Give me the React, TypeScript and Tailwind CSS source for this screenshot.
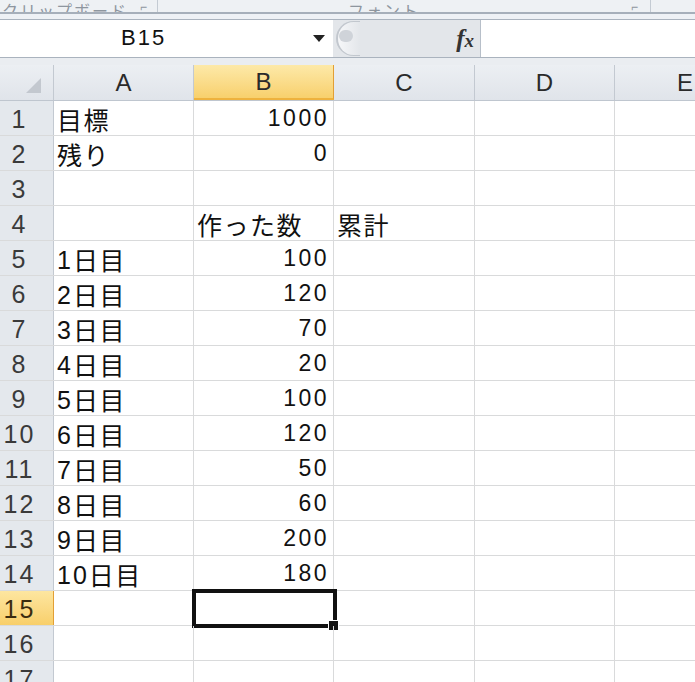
import React from "react";

const latin = { fontFamily: '"Liberation Sans", "Noto Sans CJK JP", sans-serif' };
const cjk = { fontFamily: '"Noto Sans CJK JP", sans-serif' };

type Row = { n: number; a?: string; b?: string; bLeft?: boolean; c?: string };

const rows: Row[] = [
  { n: 1, a: "目標", b: "1000" },
  { n: 2, a: "残り", b: "0" },
  { n: 3 },
  { n: 4, b: "作った数", bLeft: true, c: "累計" },
  { n: 5, a: "1日目", b: "100" },
  { n: 6, a: "2日目", b: "120" },
  { n: 7, a: "3日目", b: "70" },
  { n: 8, a: "4日目", b: "20" },
  { n: 9, a: "5日目", b: "100" },
  { n: 10, a: "6日目", b: "120" },
  { n: 11, a: "7日目", b: "50" },
  { n: 12, a: "8日目", b: "60" },
  { n: 13, a: "9日目", b: "200" },
  { n: 14, a: "10日目", b: "180" },
  { n: 15 },
  { n: 16 },
  { n: 17 },
];

function Txt({ s, wide }: { s: string; wide?: boolean }) {
  const parts = s.match(/[0-9A-Za-z]+|[^0-9A-Za-z]+/g) || [];
  return (
    <span className="whitespace-nowrap flex items-end">
      {parts.map((p, i) =>
        /^[0-9A-Za-z]/.test(p) ? (
          wide ? (
            <span key={i} className="text-[25px] leading-none tracking-[2px] pb-[2px] text-[#111]" style={latin}>
              {p}
            </span>
          ) : (
            <span key={i} className="text-[23px] leading-none tracking-[2.5px] pb-[5px] text-[#111]" style={latin}>
              {p}
            </span>
          )
        ) : (
          <span key={i} className="text-[25px] leading-none tracking-[1.5px] pb-[3px] text-[#111]" style={cjk}>
            {p}
          </span>
        )
      )}
    </span>
  );
}

function Cell({ w, s, right, sel, wide }: { w: string; s?: string; right?: boolean; sel?: boolean; wide?: boolean }) {
  return (
    <div
      className={`relative h-full shrink-0 border-r border-[#d9dadb] flex items-end ${w} ${right ? "justify-end pr-[4px]" : "justify-start pl-[3px]"}`}
    >
      {s && <Txt s={s} wide={wide} />}
      {sel && (
        <>
          <div className="absolute left-[-2px] top-[-2px] w-[145px] h-[39px] border-[4px] border-[#111]" />
          <div className="absolute left-[134px] top-[29px] w-[11px] h-[11px] bg-[#111] border-[1.5px] border-white" />
        </>
      )}
    </div>
  );
}

function HeadCell({ w, label, extra }: { w: string; label: string; extra?: string }) {
  return (
    <div
      className={`${w} shrink-0 h-full flex items-center justify-center leading-none text-[24px] text-[#2a2a2a] ${extra ?? "border-r border-[#c3c9d1]"}`}
      style={latin}
    >
      {label}
    </div>
  );
}

export default function App() {
  return (
    <div className="w-[695px] h-[682px] overflow-hidden bg-white flex flex-col" style={latin}>
      {/* ribbon group labels strip */}
      <div className="h-[12px] shrink-0 bg-[#eef1f4] relative flex items-end overflow-hidden text-[#8e969f]">
        <div className="w-[158px] h-full flex items-end justify-between pl-[2px] pr-[10px] border-r border-[#c4cbd3]">
          <span className="text-[16px] leading-none translate-y-[6px] tracking-[2px]" style={cjk}>クリップボード</span>
          <span className="text-[12px] leading-none translate-y-[1px]">⌐</span>
        </div>
        <div className="w-[493px] h-full flex items-end justify-between pl-[190px] pr-[12px] border-r border-[#c4cbd3]">
          <span className="text-[16px] leading-none translate-y-[6px] tracking-[2px]" style={cjk}>フォント</span>
          <span className="text-[12px] leading-none translate-y-[1px]">⌐</span>
        </div>
        <div className="flex-1" />
      </div>
      <div className="h-[2px] shrink-0 bg-[#a6afba]" />
      {/* formula bar */}
      <div className="h-[51px] shrink-0 bg-[#e6eaee] flex flex-col">
        <div className="h-[5px] bg-[#eef1f5]" />
        <div className="h-[39px] flex border-y border-[#aab3be] bg-white">
          <div className="w-[333px] shrink-0 flex items-center relative">
            <span className="absolute left-[121px] top-[7px] text-[22px] leading-none tracking-[2px] text-[#111]">B15</span>
            <span className="absolute left-[313px] top-[15px] w-0 h-0 border-l-[6px] border-r-[6px] border-t-[7px] border-l-transparent border-r-transparent border-t-[#222]" />
          </div>
          <div className="w-[148px] shrink-0 bg-[#e3e6ea] relative flex items-center justify-end pr-[6px] border-r border-[#b7bfc9]">
            <div className="absolute left-[3px] top-[1px] w-[24px] h-[35px] rounded-l-full border-l-2 border-y border-[#c2c7ce] bg-gradient-to-r from-[#f6f7f9] to-[#e3e6ea]" />
            <div className="absolute left-[6px] top-[10px] w-[14px] h-[12px] rounded-full bg-[#cfd3d9]" />
            <span className="italic font-bold text-[25px] leading-none text-[#333]" style={{ fontFamily: '"Liberation Serif", serif' }}>
              f<span className="text-[19px]">x</span>
            </span>
          </div>
          <div className="flex-1 bg-white" />
        </div>
        <div className="flex-1 bg-[#eaedf1]" />
      </div>
      {/* column headers */}
      <div className="h-[36px] shrink-0 flex border-b border-[#bfc6cf] bg-gradient-to-b from-[#eceff3] to-[#e0e4ea]">
        <div className="w-[54px] shrink-0 border-r border-[#c3c9d1] relative">
          <svg className="absolute right-[12px] bottom-[7px]" width="15" height="15" viewBox="0 0 15 15">
            <polygon points="15,0 15,15 0,15" fill="#c3c8cf" />
          </svg>
        </div>
        <HeadCell w="w-[140px]" label="A" />
        <HeadCell
          w="w-[140px]"
          label="B"
          extra="border-r border-[#e29f35] border-b-2 border-b-[#eeb23e] -mb-[1px] bg-gradient-to-b from-[#fde9a8] to-[#f8d06c]"
        />
        <HeadCell w="w-[141px]" label="C" />
        <HeadCell w="w-[140px]" label="D" />
        <HeadCell w="w-[140px]" label="E" extra="" />
      </div>
      {/* rows */}
      <div className="flex flex-col">
        {rows.map((r) => {
          const sel = r.n === 15;
          return (
            <div key={r.n} className="h-[35px] shrink-0 flex border-b border-[#d9dadb]">
              <div
                className={`w-[54px] shrink-0 h-full flex items-center justify-center pr-[14px] pt-[2px] text-[25px] leading-none tracking-[2px] border-r ${sel ? "bg-gradient-to-b from-[#fde6a0] to-[#f8cf6a] border-r-[#e29f35] text-[#3a2c10]" : "bg-[#e4e8ed] border-[#c3c9d1] text-[#3a3a3a]"}`}
              >
                {r.n}
              </div>
              <Cell w="w-[140px]" s={r.a} wide />
              <Cell w="w-[140px]" s={r.b} right={!r.bLeft} sel={sel} />
              <Cell w="w-[141px]" s={r.c} />
              <Cell w="w-[140px]" />
              <div className="w-[140px] shrink-0" />
            </div>
          );
        })}
      </div>
    </div>
  );
}
